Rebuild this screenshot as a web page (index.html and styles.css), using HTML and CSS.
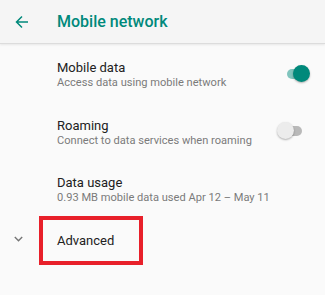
FILE: index.html
```html
<!DOCTYPE html>
<html>
<head>
<meta charset="utf-8">
<link rel="stylesheet" href="styles.css">
</head>
<body>
<div class="appbar">
  <svg class="back" width="14" height="14" viewBox="0 0 14 14"><path d="M13 7H1.8M7 1.5L1.5 7L7 12.5" fill="none" stroke="#00897b" stroke-width="1.5"/></svg>
  <div class="apptitle">Mobile network</div>
</div>
<div class="list">
  <div class="row r1">
    <div class="text">
      <div class="title">Mobile data</div>
      <div class="sub">Access data using mobile network</div>
    </div>
    <div class="switch on"><span class="track"></span><span class="thumb"></span></div>
  </div>
  <div class="row r2">
    <div class="text">
      <div class="title">Roaming</div>
      <div class="sub">Connect to data services when roaming</div>
    </div>
    <div class="switch off"><span class="track"></span><span class="thumb"></span></div>
  </div>
  <div class="row r3">
    <div class="text">
      <div class="title">Data usage</div>
      <div class="sub">0.93 MB mobile data used Apr 12 – May 11</div>
    </div>
  </div>
  <div class="adv">
    <svg class="chev" width="9" height="6" viewBox="0 0 9 6"><path d="M0.8 1L4.5 4.7L8.2 1" fill="none" stroke="#757575" stroke-width="1.4"/></svg>
    <div class="advbox"><span class="title">Advanced</span></div>
  </div>
</div>
</body>
</html>
```
FILE: styles.css
```css
html, body {
  margin: 0;
  padding: 0;
  background: #fafafa;
  font-family: Roboto, "Noto Sans", sans-serif;
  width: 325px;
  height: 295px;
  overflow: hidden;
}
.appbar {
  height: 43px;
  background: #f5f5f5;
  display: flex;
  align-items: center;
  border-bottom: 1px solid #dcdcdc;
  box-shadow: 0 1px 2px rgba(0,0,0,0.08);
}
.back {
  margin-left: 15px;
  margin-right: 28px;
}
.apptitle {
  color: #00897b;
  font-weight: 500;
  font-size: 16px;
}
.list {
  display: flex;
  flex-direction: column;
  padding-top: 1px;
}
.row {
  display: flex;
  align-items: center;
  padding-left: 57px;
  padding-right: 15px;
}
.r1 { height: 57px; }
.r2 { height: 58px; }
.r3 { height: 56px; }
.text {
  flex: 1;
  display: flex;
  flex-direction: column;
  padding-top: 2px;
}
.title {
  font-size: 13px;
  line-height: 17px;
  color: #212121;
}
.sub {
  font-size: 11.1px;
  line-height: 14px;
  color: #7a7a7a;
}
.switch {
  position: relative;
  width: 27px;
  height: 18px;
}
.track {
  position: absolute;
  left: 4px;
  top: 4px;
  width: 21px;
  height: 10px;
  border-radius: 5px;
}
.thumb {
  position: absolute;
  top: 0;
  width: 17px;
  height: 17px;
  border-radius: 50%;
  box-shadow: 0 1px 2px rgba(0,0,0,0.3);
}
.on .track { background: #80c4bd; }
.on .thumb { background: #00897b; right: 0; }
.off { margin-right: 6px; }
.off .track { background: #b9b9b9; }
.off .thumb { background: #ececec; left: 0; }
.adv {
  display: flex;
  align-items: center;
  padding-left: 14px;
}
.chev {
  margin-right: 16px;
  margin-bottom: 4px;
}
.advbox {
  box-sizing: border-box;
  width: 104px;
  height: 49px;
  border: 4px solid #e8202a;
  padding: 10px 0 0 14px;
}
```
